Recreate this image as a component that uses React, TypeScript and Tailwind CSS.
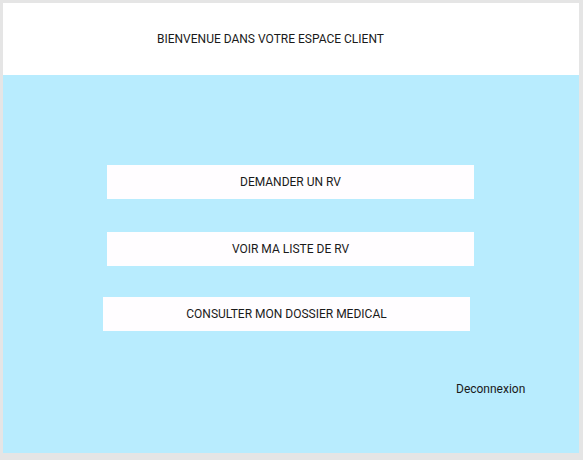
import React from "react";

export default function App() {
  return (
    <div
      className="w-[583px] h-[460px] bg-[#e5e5e5] pt-[3px] pl-[3px]"
      style={{ fontFamily: "Roboto, 'Liberation Sans', sans-serif" }}
    >
      <div className="w-[576px] flex flex-col">
        <div className="h-[72px] bg-white flex items-center pl-[154px] text-[12px] text-[#1a1a1a]">
          BIENVENUE DANS VOTRE ESPACE CLIENT
        </div>
        <div className="h-[378px] bg-[#b8ecfe] flex flex-col pt-[90px] text-[12px] text-[#1a1a1a]">
          <div className="ml-[104px] w-[367px] h-[34px] bg-[#fffdff] flex items-center justify-center">
            DEMANDER UN RV
          </div>
          <div className="ml-[104px] mt-[33px] w-[367px] h-[34px] bg-[#fffdff] flex items-center justify-center">
            VOIR MA LISTE DE RV
          </div>
          <div className="ml-[100px] mt-[31px] w-[367px] h-[34px] bg-[#fffdff] flex items-center justify-center">
            CONSULTER MON DOSSIER MEDICAL
          </div>
          <div className="ml-[453px] mt-[51px] leading-[14px]">Deconnexion</div>
        </div>
      </div>
    </div>
  );
}
